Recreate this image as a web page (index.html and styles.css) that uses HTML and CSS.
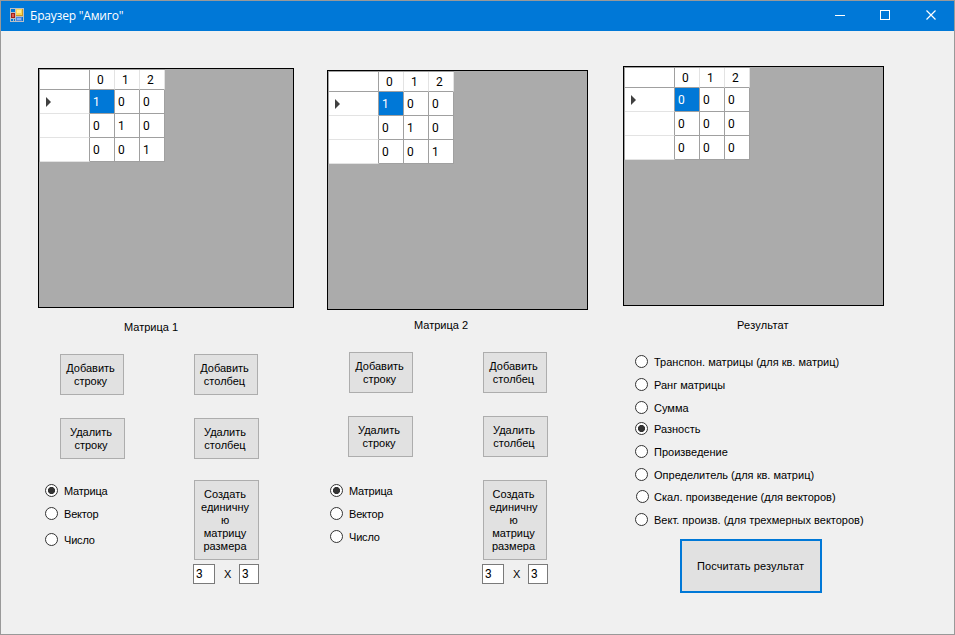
FILE: index.html
```html
<!DOCTYPE html>
<html lang="ru">
<head>
<meta charset="utf-8">
<title>Браузер "Амиго"</title>
<link rel="stylesheet" href="styles.css">
</head>
<body>
<div class="window">
  <header class="titlebar">
    <svg class="app-icon" width="14" height="14" viewBox="0 0 14 14" shape-rendering="crispEdges">
      <path d="M0 .5h14M.500 0v14M13.500 0v14M0 13.500h14M5.500 0v14M0 4.500h6M0 10.500h6M5 8.500h9" fill="none" stroke="#b9bfc6"/>
      <path d="M3 11h1v3h-1z" fill="#b9bfc6"/>
      <rect x="6" y="1" width="7" height="7" fill="#c89b28"/>
      <rect x="6" y="1" width="6" height="6" fill="#fcd653"/>
      <rect x="7" y="2" width="4" height="3" fill="#ffeb96"/>
      <rect x="1" y="5" width="4" height="5" fill="#a32018"/>
      <rect x="2" y="6" width="2" height="3" fill="#e05a4c"/>
      <rect x="6" y="9" width="6" height="4" fill="#4d86dc"/>
      <rect x="7" y="10" width="4" height="2" fill="#8ab4f5"/>
    </svg>
    <span class="title">Браузер "Амиго"</span>
    <svg class="caption-buttons" width="137" height="30" viewBox="0 0 137 30" fill="none" stroke="#fff">
      <path d="M18 14.500h10M63.500 9.500h9v9h-9z" shape-rendering="crispEdges"/>
      <path d="M109.500 9.500l9 9M118.500 9.500l-9 9" stroke-width="1.200"/>
    </svg>
  </header>

  <main class="content">
    <section class="column first">
      <div class="data-grid">
        <table>
          <tr><th></th><th>0</th><th>1</th><th>2</th></tr>
          <tr><th><i class="arrow"></i></th><td class="selected">1</td><td>0</td><td>0</td></tr>
          <tr><th></th><td>0</td><td>1</td><td>0</td></tr>
          <tr><th></th><td>0</td><td>0</td><td>1</td></tr>
        </table>
      </div>
      <div class="caption"><span>Матрица 1</span></div>
      <div class="controls">
        <div class="stack rows">
          <button>Добавить<br>строку</button>
          <button class="wide">Удалить<br>строку</button>
          <div class="radios">
            <label><input type="radio" name="type1" checked><span>Матрица</span></label>
            <label><input type="radio" name="type1"><span>Вектор</span></label>
            <label><input type="radio" name="type1"><span>Число</span></label>
          </div>
        </div>
        <div class="stack cols">
          <button>Добавить<br>столбец</button>
          <button class="wide">Удалить<br>столбец</button>
          <button class="wide create">Создать<br>единичну<br>ю<br>матрицу<br>размера</button>
          <div class="size"><input type="text" value="3"><span>X</span><input type="text" value="3"></div>
        </div>
      </div>
    </section>

    <section class="column second">
      <div class="data-grid">
        <table>
          <tr><th></th><th>0</th><th>1</th><th>2</th></tr>
          <tr><th><i class="arrow"></i></th><td class="selected">1</td><td>0</td><td>0</td></tr>
          <tr><th></th><td>0</td><td>1</td><td>0</td></tr>
          <tr><th></th><td>0</td><td>0</td><td>1</td></tr>
        </table>
      </div>
      <div class="caption"><span>Матрица 2</span></div>
      <div class="controls">
        <div class="stack rows">
          <button>Добавить<br>строку</button>
          <button class="wide">Удалить<br>строку</button>
          <div class="radios">
            <label><input type="radio" name="type2" checked><span>Матрица</span></label>
            <label><input type="radio" name="type2"><span>Вектор</span></label>
            <label><input type="radio" name="type2"><span>Число</span></label>
          </div>
        </div>
        <div class="stack cols">
          <button>Добавить<br>столбец</button>
          <button class="wide">Удалить<br>столбец</button>
          <button class="create">Создать<br>единичну<br>ю<br>матрицу<br>размера</button>
          <div class="size"><input type="text" value="3"><span>X</span><input type="text" value="3"></div>
        </div>
      </div>
    </section>

    <section class="column third">
      <div class="data-grid">
        <table>
          <tr><th></th><th>0</th><th>1</th><th>2</th></tr>
          <tr><th><i class="arrow"></i></th><td class="selected">0</td><td>0</td><td>0</td></tr>
          <tr><th></th><td>0</td><td>0</td><td>0</td></tr>
          <tr><th></th><td>0</td><td>0</td><td>0</td></tr>
        </table>
      </div>
      <div class="caption"><span>Результат</span></div>
      <div class="radios operations">
        <label><input type="radio" name="op"><span>Транспон. матрицы (для кв. матриц)</span></label>
        <label><input type="radio" name="op"><span>Ранг матрицы</span></label>
        <label><input type="radio" name="op"><span>Сумма</span></label>
        <label class="tight"><input type="radio" name="op" checked><span>Разность</span></label>
        <label><input type="radio" name="op"><span>Произведение</span></label>
        <label><input type="radio" name="op"><span>Определитель (для кв. матриц)</span></label>
        <label class="scalar"><input type="radio" name="op"><span>Скал. произведение (для векторов)</span></label>
        <label><input type="radio" name="op"><span>Вект. произв. (для трехмерных векторов)</span></label>
      </div>
      <button class="calculate">Посчитать результат</button>
    </section>
  </main>
</div>
</body>
</html>
```
FILE: styles.css
```css
* { box-sizing: border-box; }

body {
  margin: 0;
  overflow: hidden;
  font: 11px/13px "Liberation Sans", Arial, sans-serif;
  color: #000;
}

.window {
  width: 955px;
  height: 635px;
  border: 1px solid #999;
  background: #f0f0f0;
}

.titlebar {
  display: flex;
  align-items: center;
  height: 30px;
  padding-left: 9px;
  background: #0078d7;
  color: #fff;
}
.title {
  margin-left: 6px;
  font: 12px/16px "Open Sans", "Noto Sans", sans-serif;
  letter-spacing: -0.2px;
}
.app-icon { margin-bottom: 2px; }
.caption-buttons { margin-left: auto; }

.content {
  display: flex;
  align-items: flex-start;
  padding-left: 37px;
}
.column { width: 261px; }
.first { width: 256px; margin-top: 37px; }
.second { margin: 39px 0 0 33px; }
.third { margin: 35px 0 0 35px; }

.data-grid {
  height: 240px;
  border: 1px solid #000;
  background: #ababab;
}
table {
  table-layout: fixed;
  width: 126px;
  border-collapse: separate;
  border-spacing: 0;
  border-top: 1px solid #a0a0a0;
  border-left: 1px solid #a0a0a0;
  font-family: Roboto, sans-serif;
  font-size: 12px;
}
th, td {
  width: 25px;
  height: 24px;
  padding: 1px 0 0 3px;
  border-right: 1px solid #a0a0a0;
  border-bottom: 1px solid #a0a0a0;
  background: #fff;
  font-weight: normal;
  text-align: left;
}
tr:first-child th {
  height: 20px;
  padding-left: 7px;
  border-right-color: #e3e3e3;
  border-bottom-color: #a0a0a0;
}
tr th:first-child {
  width: 50px;
  padding-left: 6px;
  border-bottom-color: #e3e3e3;
}
tr:first-child th:first-child {
  border-right-color: #a0a0a0;
  border-bottom-color: #a0a0a0;
}
td.selected { background: #0078d7; color: #fff; }
.arrow {
  display: block;
  width: 0;
  border: solid transparent;
  border-width: 5px 0 5px 5px;
  border-left-color: #404040;
}

.caption { height: 14px; margin-top: 13px; }
.first .caption { padding-left: 86px; }
.second .caption { margin-top: 9px; padding-left: 87px; }
.third .caption { padding-left: 114px; letter-spacing: 0.2px; }

.controls { display: flex; margin-top: 19px; }
.first .controls { margin-left: 7px; }
.second .controls { margin-left: 3px; }
.stack { display: flex; flex-direction: column; align-items: flex-start; }
.first .rows { width: 148px; }
.second .rows { width: 152px; }
.stack .radios { letter-spacing: -0.2px; }

button {
  width: 64px;
  height: 41px;
  padding: 1px 3px 0 0;
  border: 1px solid #adadad;
  border-radius: 0;
  background: #e1e1e1;
  color: #000;
  font: inherit;
  white-space: nowrap;
}
button.wide { width: 65px; }
.stack button + button { margin-top: 23px; }
.first .rows button { margin-left: 15px; }
.second .rows button { margin-left: 19px; }
.second .rows button.wide { margin-left: 18px; }
.cols button { margin-left: 1px; }
.stack button.create { height: 80px; margin-top: 21px; }
.second .stack button.create { margin-top: 23px; }

.radios { display: flex; flex-direction: column; gap: 10px; margin-top: 25px; }
.second .radios { margin-top: 27px; }
.first .radios label:last-child { margin-top: 3px; }
label { display: flex; height: 13px; white-space: nowrap; }
label span { margin-left: 6px; padding-top: 1px; }
input[type="radio"] {
  appearance: none;
  width: 13px;
  height: 13px;
  margin: 0;
  border: 1px solid #333;
  border-radius: 50%;
  background: #fff;
}
input[type="radio"]:checked {
  background: radial-gradient(circle, #333 0 3.2px, #fff 3.9px);
}

.size { display: flex; align-items: center; height: 20px; margin-top: 4px; }
.size input {
  width: 22px;
  height: 20px;
  padding: 0 0 0 2px;
  border: 1px solid #7a7a7a;
  background: #fff;
  font: 12px Roboto, sans-serif;
}
.size span { width: 24px; padding-left: 9px; }
.size input:last-child { width: 20px; }

.third .operations { margin: 22px 0 0 12px; }
.operations .tight { margin-top: -2px; }
.operations .scalar { margin: -1px 0 0 1px; }
.operations .scalar span { margin-left: 5px; }
.calculate {
  display: block;
  width: 142px;
  height: 54px;
  margin: 13px 0 0 57px;
  padding: 0 1px 0 0;
  border: 2px solid #0078d7;
  letter-spacing: 0.1px;
}
```
